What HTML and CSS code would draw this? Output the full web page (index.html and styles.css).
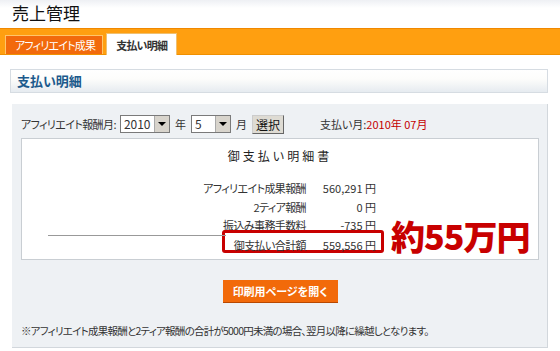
FILE: index.html
```html
<!DOCTYPE html>
<html lang="ja">
<head>
    <meta charset="UTF-8">
    <title>売上管理</title>
    <link rel="stylesheet" href="styles.css">
</head>
<body>
    <h1 class="page-title">売上管理</h1>

    <!-- タブ -->
    <div class="tab-bar">
        <span class="tab tab-off">アフィリエイト成果</span>
        <span class="tab tab-on">支払い明細</span>
    </div>

    <div class="content">
        <h2 class="section-head">支払い明細</h2>

        <div class="panel">
            <div class="form-row">
                <span class="form-label">アフィリエイト報酬月:</span>
                <span class="select select-year"><span class="select-val">2010</span><span class="select-btn"></span></span>
                <span>年</span>
                <span class="select select-month"><span class="select-val">5</span><span class="select-btn"></span></span>
                <span>月</span>
                <span class="btn-select">選択</span>
                <span class="pay-month">支払い月:<em>2010年 07月</em></span>
            </div>

            <!-- 明細書 -->
            <div class="receipt">
                <div class="receipt-title">御支払い明細書</div>
                <div class="receipt-table">
                    <div class="r-label">アフィリエイト成果報酬</div><div class="r-val">560,291 円</div>
                    <div class="r-label">2ティア報酬</div><div class="r-val">0 円</div>
                    <div class="r-label">振込み事務手数料</div><div class="r-val">-735 円</div>
                    <div class="r-label r-total">御支払い合計額</div><div class="r-val r-total">559,556 円</div>
                    <div class="mark-box"></div>
                    <div class="mark-text">約55万円</div>
                </div>
            </div>

            <div class="print-row">
                <span class="btn-print">印刷用ページを開く</span>
            </div>

            <p class="note">※アフィリエイト成果報酬と2ティア報酬の合計が5000円未満の場合、翌月以降に繰越しとなります。</p>
        </div>
    </div>
</body>
</html>
```

FILE: styles.css
```css
/* ベース */
body {
    margin: 0;
    background: #fff;
    font-family: "Noto Sans CJK JP", "Liberation Sans", sans-serif;
    font-size: 12px;
    color: #222;
    font-feature-settings: "palt";
    width: 560px;
    overflow: hidden;
}

.page-title {
    margin: 0;
    height: 28px;
    padding-left: 12px;
    font-size: 17px;
    font-weight: normal;
    line-height: 26px;
    color: #111;
    background: linear-gradient(#eef0f4, #fff 8px);
}

/* タブ */
.tab-bar {
    height: 25px;
    background: #ff9f10;
    border-top: 1px solid #f08800;
    border-bottom: 1px solid #f09000;
    display: flex;
    align-items: flex-end;
    gap: 3px;
    padding-left: 5px;
}

.tab {
    display: block;
    height: 18px;
    line-height: 18px;
    font-size: 11px;
    letter-spacing: -0.8px;
}

.tab-off {
    padding: 0 7px 0 9px;
    background: #f26a0c;
    color: #fff;
    border: 1px solid #ffc56a;
    border-bottom: none;
}

.tab-on {
    height: 21px;
    line-height: 22px;
    background: #fff;
    color: #333;
    font-weight: bold;
    padding: 0 9px;
    margin-bottom: -1px;
    border: 1px solid #f0c070;
    border-bottom: none;
}

/* 本文 */
.content {
    padding: 14px 12px 0 10px;
}

.section-head {
    margin: 0;
    height: 22px;
    line-height: 22px;
    padding-left: 6px;
    font-size: 13px;
    color: #1c5a8c;
    border: 1px solid #d6dce2;
    background: linear-gradient(#fff, #fdfdfb 40%, #e6ebf0);
}

.panel {
    margin: 11px 0 0 2px;
    background: #eef1f4;
    border-right: 1px solid #d2d7dc;
    border-bottom: 1px solid #d2d7dc;
    padding: 11px 8px 0 9px;
    height: 232px;
}

.form-row {
    display: flex;
    align-items: center;
    height: 18px;
    color: #333;
    font-size: 11px;
}

.form-row > span {
    margin-right: 5px;
}

.form-row .form-label {
    letter-spacing: -0.6px;
    margin-right: 4px;
}

.select {
    display: flex;
    height: 16px;
    border: 1px solid #7a7a7a;
    background: #fff;
}

.select-year { width: 48px; }
.select-month { width: 38px; }

.select-val {
    flex: 1;
    padding-left: 3px;
    line-height: 16px;
    font-size: 12px;
}

.select-btn {
    width: 14px;
    background: #d8d4cc;
    border-left: 1px solid #aaa;
    position: relative;
}

.select-btn::after {
    content: "";
    position: absolute;
    left: 3px;
    top: 6px;
    border-left: 4px solid transparent;
    border-right: 4px solid transparent;
    border-top: 4px solid #000;
}

.form-row .btn-select {
    margin-left: 0;
    padding: 0 3px;
    height: 17px;
    line-height: 17px;
    background: #dedbd3;
    border: 1px solid #666;
    border-top-color: #ccc;
    border-left-color: #ccc;
    font-size: 12px;
    color: #111;
}

.form-row .pay-month {
    margin-left: 31px;
}

.pay-month em {
    font-style: normal;
    color: #c40000;
}

/* 明細書 */
.receipt {
    margin-top: 5px;
    height: 122px;
    background: #fff;
    border: 1px solid #c9ced3;
    padding-top: 8px;
    box-sizing: border-box;
}

.receipt-title {
    text-align: center;
    letter-spacing: 3px;
    line-height: 18px;
    color: #222;
}

.receipt-table {
    position: relative;
    display: grid;
    grid-template-columns: 1fr 74px;
    width: 332px;
    margin: 14px 0 0 26px;
    font-size: 11px;
    line-height: 18.5px;
    color: #333;
}

.r-label { text-align: right; letter-spacing: -0.6px; }
.r-val { text-align: right; padding-right: 4px; }

/* 合計行の罫線（赤枠の下には出さない） */
.r-total {
    position: relative;
    z-index: 1;
    border-top: 1px solid transparent;
}

.r-label.r-total {
    border-image: linear-gradient(to right, #999 calc(100% - 80px), transparent 0) 1;
}

/* 注釈 */
.mark-box {
    position: absolute;
    left: 174px;
    top: 51px;
    width: 156px;
    height: 17px;
    border: 3px solid #c80000;
    border-radius: 3px;
    background: #fff;
}

.mark-text {
    position: absolute;
    left: 343px;
    top: 38px;
    white-space: nowrap;
    font-size: 34px;
    font-weight: 900;
    line-height: 38px;
    color: #c80000;
    letter-spacing: -1px;
}

.print-row {
    margin-top: 20px;
    text-align: center;
}

.btn-print {
    display: inline-block;
    width: 115px;
    height: 22px;
    line-height: 22px;
    background: #f26a0a;
    border-bottom: 1px solid #b84800;
    color: #fff;
    font-weight: bold;
    font-size: 11px;
}

.note {
    margin: 20px 0 0 0;
    font-size: 10.5px;
    letter-spacing: -0.75px;
    color: #333;
}
```
